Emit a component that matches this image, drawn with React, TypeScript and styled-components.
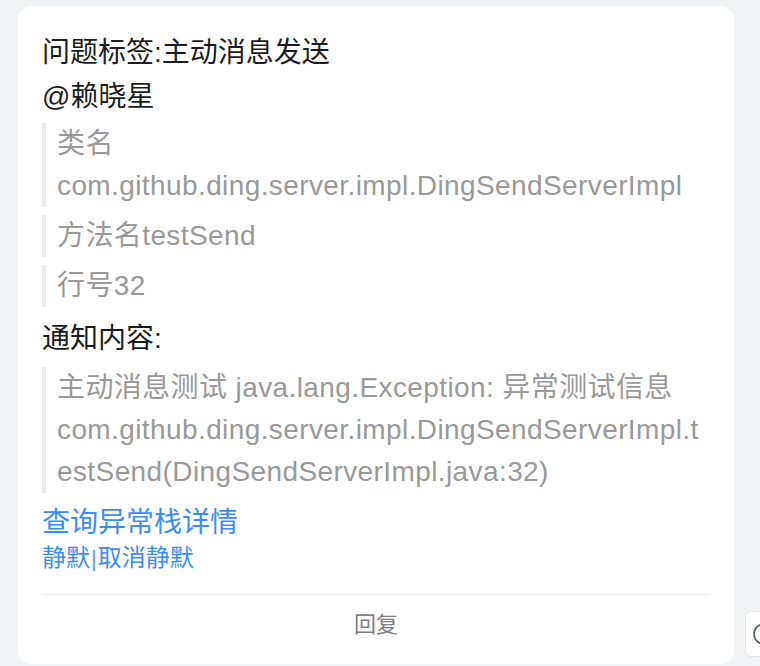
import React from "react";
import styled, { createGlobalStyle } from "styled-components";

const Global = createGlobalStyle`
  html, body {
    margin: 0;
    padding: 0;
    background: #f2f3f5;
    font-family: "Liberation Sans", "Noto Sans CJK SC", sans-serif;
    overflow: hidden;
  }
  * { box-sizing: border-box; }
`;

const Page = styled.div`
  position: relative;
  width: 760px;
  height: 666px;
  padding: 6px 0 0 18px;
`;

const Card = styled.div`
  width: 716px;
  height: 658px;
  background: #ffffff;
  border-radius: 14px;
  padding: 26px 24px 0;
  display: flex;
  flex-direction: column;
  & > * {
    flex-shrink: 0;
  }
`;

const Line = styled.div<{ $mt?: number }>`
  font-size: 28px;
  line-height: 42px;
  color: #191c20;
  margin-top: ${(p) => p.$mt ?? 0}px;
  white-space: nowrap;
`;

const QuoteGroup = styled.div<{ $mt?: number }>`
  display: flex;
  flex-direction: column;
  gap: 8px;
  margin-top: ${(p) => p.$mt ?? 0}px;
`;

const Quote = styled.div`
  border-left: 4px solid #ececec;
  padding-left: 11px;
  font-size: 28px;
  line-height: 42px;
  letter-spacing: 0.4px;
  color: #999999;
  white-space: nowrap;
`;

const LinkLine = styled.a<{ $size: number; $lh: number; $mt?: number }>`
  display: block;
  font-size: ${(p) => p.$size}px;
  line-height: ${(p) => p.$lh}px;
  margin-top: ${(p) => p.$mt ?? 0}px;
  color: #3a8df5;
  text-decoration: none;
  white-space: nowrap;
`;

const Pipe = styled.span`
  color: #5b9ef0;
  font-size: 22px;
  margin: 0 1px;
`;

const Divider = styled.div`
  margin-top: 21px;
  height: 1px;
  background: #ececec;
`;

const Footer = styled.div`
  padding: 15px 0 16px;
  text-align: center;
  font-size: 22px;
  line-height: 30px;
  color: #7c7f84;
`;

const FloatTab = styled.div`
  position: absolute;
  left: 745px;
  top: 611px;
  width: 40px;
  height: 46px;
  background: #ffffff;
  border: 1px solid #e2e3e6;
  border-radius: 6px;
  display: flex;
  align-items: center;
  padding-left: 6px;
`;

export default function App() {
  return (
    <>
      <Global />
      <Page>
        <Card>
          <Line>问题标签:主动消息发送</Line>
          <Line $mt={2}>@赖晓星</Line>
          <QuoteGroup $mt={5}>
            <Quote>
              类名
              <br />
              com.github.ding.server.impl.DingSendServerImpl
            </Quote>
            <Quote>方法名testSend</Quote>
            <Quote>行号32</Quote>
          </QuoteGroup>
          <Line $mt={11}>通知内容:</Line>
          <QuoteGroup $mt={7}>
            <Quote>
              主动消息测试 java.lang.Exception: 异常测试信息
              <br />
              com.github.ding.server.impl.DingSendServerImpl.t
              <br />
              estSend(DingSendServerImpl.java:32)
            </Quote>
          </QuoteGroup>
          <LinkLine href="#" $size={28} $lh={42} $mt={9}>
            查询异常栈详情
          </LinkLine>
          <LinkLine as="div" $size={24} $lh={28}>
            <span>静默</span>
            <Pipe>|</Pipe>
            <span>取消静默</span>
          </LinkLine>
          <Divider />
          <Footer>回复</Footer>
        </Card>
        <FloatTab>
          <svg width="24" height="24" viewBox="0 0 24 24" fill="none">
            <circle cx="12" cy="12" r="10" stroke="#55585c" strokeWidth="1.6" />
          </svg>
        </FloatTab>
      </Page>
    </>
  );
}
